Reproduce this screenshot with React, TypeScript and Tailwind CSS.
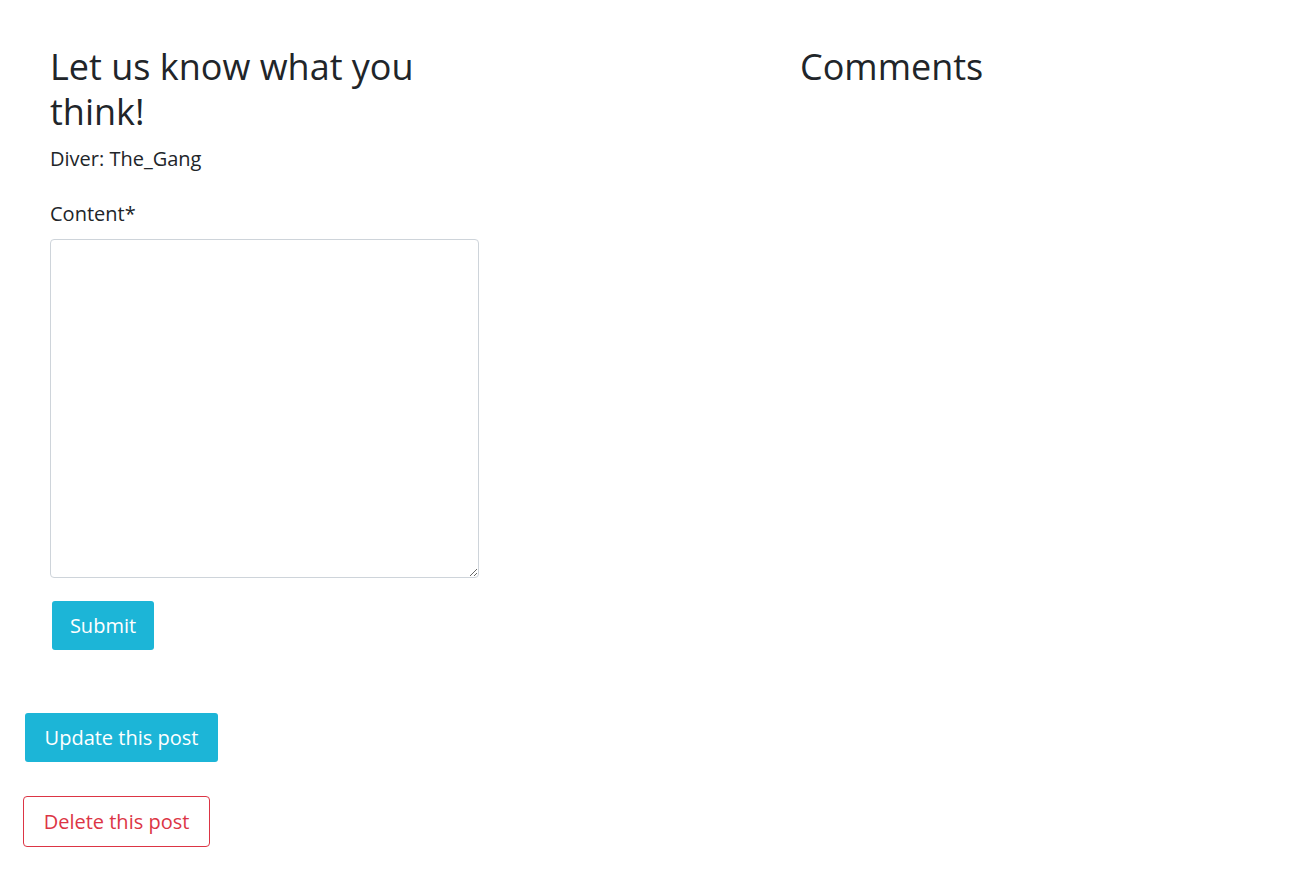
export default function App() {
  return (
    <div className="min-h-[884px] bg-white text-[#212529] font-['Open_Sans',sans-serif]">
      <div className="flex pt-[44px]">
        {/* Form column */}
        <div className="ml-[50px] w-[429px]">
          <h2 className="text-[36px] leading-[45px] font-normal">Let us know what you think!</h2>
          <p className="mt-[12px] text-[20px] leading-[26px]">Diver: The_Gang</p>
          <form className="mt-[29px]" onSubmit={(e) => e.preventDefault()}>
            <label htmlFor="content" className="block text-[20px] leading-[26px]">
              Content*
            </label>
            <textarea
              id="content"
              className="mt-[12px] block w-[429px] h-[339px] border border-[#ced4da] rounded-[4px] px-3 py-2 text-[18px] outline-none"
            />
            <button
              type="submit"
              className="mt-[23px] ml-[2px] h-[49px] w-[102px] rounded-[3px] bg-[#1cb5d7] text-white text-[20px]"
            >
              Submit
            </button>
          </form>
        </div>

        {/* Comments column */}
        <div className="ml-[321px]">
          <h2 className="text-[36px] leading-[45px] font-normal">Comments</h2>
        </div>
      </div>

      <div className="mt-[63px] ml-[25px]">
        <button className="h-[49px] w-[193px] rounded-[3px] bg-[#1cb5d7] text-white text-[20px]">
          Update this post
        </button>
      </div>
      <div className="mt-[34px] ml-[23px]">
        <button className="h-[51px] w-[187px] rounded-[4px] border border-[#dc3545] text-[#dc3545] text-[20px]">
          Delete this post
        </button>
      </div>
    </div>
  );
}
